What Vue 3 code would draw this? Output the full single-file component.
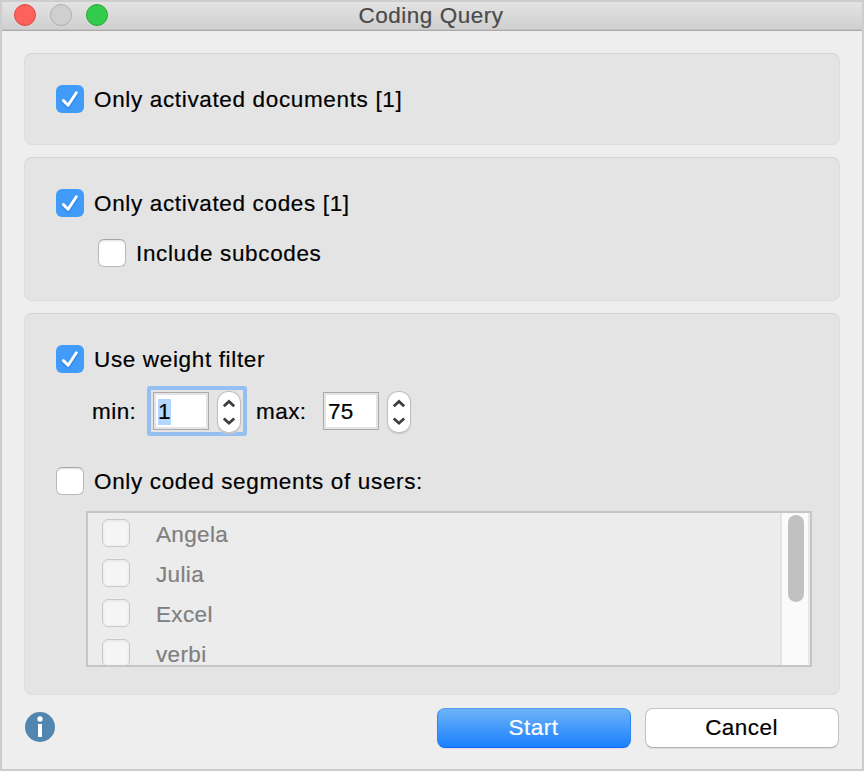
<script setup>
import { ref } from 'vue'

const users = ref(['Angela', 'Julia', 'Excel', 'verbi'])
</script>

<template>
  <div class="window">
    <header class="titlebar">
      <div class="lights">
        <i class="light close"></i>
        <i class="light minimize"></i>
        <i class="light zoom"></i>
      </div>
      <h1>Coding Query</h1>
    </header>

    <main class="content">
      <section class="panel documents">
        <div class="option">
          <span class="check on"><svg viewBox="0 0 28 28"><path d="M7.4 15.6 L12.1 20.3 L20.3 7.8" /></svg></span>
          <span class="label">Only activated documents [1]</span>
        </div>
      </section>

      <section class="panel codes">
        <div class="option">
          <span class="check on"><svg viewBox="0 0 28 28"><path d="M7.4 15.6 L12.1 20.3 L20.3 7.8" /></svg></span>
          <span class="label">Only activated codes [1]</span>
        </div>
        <div class="option sub">
          <span class="check"></span>
          <span class="label">Include subcodes</span>
        </div>
      </section>

      <section class="panel filters">
        <div class="option">
          <span class="check on"><svg viewBox="0 0 28 28"><path d="M7.4 15.6 L12.1 20.3 L20.3 7.8" /></svg></span>
          <span class="label">Use weight filter</span>
        </div>
        <div class="range">
          <span class="min">min:</span>
          <div class="spin focused">
            <span class="field"><mark>1</mark></span>
            <span class="stepper"><svg viewBox="0 0 24 42"><path d="M6.8 15.2 L12 10.4 L17.2 15.2 M6.8 27.4 L12 32.2 L17.2 27.4" /></svg></span>
          </div>
          <span class="max">max:</span>
          <div class="spin">
            <span class="field">75</span>
            <span class="stepper"><svg viewBox="0 0 24 42"><path d="M6.8 15.2 L12 10.4 L17.2 15.2 M6.8 27.4 L12 32.2 L17.2 27.4" /></svg></span>
          </div>
        </div>
        <div class="option">
          <span class="check"></span>
          <span class="label">Only coded segments of users:</span>
        </div>
        <div class="list">
          <ul>
            <li v-for="user in users" :key="user">
              <span class="check disabled"></span>
              <span>{{ user }}</span>
            </li>
          </ul>
          <div class="track"><div class="thumb"></div></div>
        </div>
      </section>
    </main>

    <footer class="footer">
      <svg class="info" viewBox="0 0 30 30">
        <circle cx="15" cy="15" r="15" fill="#5186b0" />
        <circle cx="15" cy="7" r="2.7" fill="#fff" />
        <rect x="13" y="12" width="4" height="13" fill="#fff" />
      </svg>
      <button class="btn primary">Start</button>
      <button class="btn">Cancel</button>
    </footer>
  </div>
</template>

<style>
body {
  margin: 0;
}
</style>

<style scoped>
* {
  box-sizing: border-box;
}

.window {
  display: flex;
  flex-direction: column;
  width: 864px;
  height: 771px;
  border: 2px solid #cdcdcd;
  background: #eee;
  color: #000;
  font: 22.5px/28px "Liberation Sans", Arial, sans-serif;
  letter-spacing: 0.65px;
  -webkit-text-stroke: 0.2px;
  white-space: nowrap;
  overflow: hidden;
}

.titlebar {
  display: grid;
  grid-template-columns: 120px 1fr 120px;
  height: 29px;
  flex: none;
  background: linear-gradient(#e3e3e3, #cfcfcf);
  border-bottom: 1px solid #a9a9a9;
  box-shadow: inset 0 -1px #c4c4c4;
}

.lights {
  display: flex;
  gap: 14px;
  padding: 2px 0 0 12px;
}

.light {
  width: 22px;
  height: 22px;
  border-radius: 50%;
  border: 1px solid;
}

.close {
  background: #fd625d;
  border-color: #e2463f;
}

.minimize {
  background: #cfcfcf;
  border-color: #b0b0b0;
}

.zoom {
  background: #33cb4b;
  border-color: #24a934;
}

h1 {
  margin: 0;
  padding-right: 2px;
  font-size: 22.5px;
  font-weight: 400;
  line-height: 27px;
  letter-spacing: 0.5px;
  text-align: center;
  color: #4a4a4a;
}

.content {
  display: flex;
  flex-direction: column;
  gap: 12px;
  padding: 22px 22px 0;
}

.panel {
  border: 1px solid #dcdcdc;
  border-top-color: #d4d4d4;
  border-radius: 8px;
  background: #e4e4e4;
  padding: 31px 27px 0 31px;
}

.documents {
  height: 92px;
}

.codes {
  height: 144px;
}

.filters {
  height: 382px;
}

.option {
  display: flex;
  align-items: center;
  gap: 10px;
  height: 28px;
}

.label {
  padding-top: 2px;
}

.sub {
  margin: 22px 0 0 42px;
}

.check {
  flex: none;
  width: 28px;
  height: 28px;
  border: 1px solid #b9b9b9;
  border-top-color: #a6a6a6;
  border-radius: 6px;
  background: #fff;
  box-shadow: inset 0 2px 2px -1px #ddd;
}

.on {
  border: 0;
  background: #419bf9;
  box-shadow: none;
}

.disabled {
  background: #f5f5f5;
  border-color: #c9c9c9;
  box-shadow: inset 0 1px 3px #e2e2e2;
}

.check svg,
.stepper svg {
  display: block;
  fill: none;
}

.check svg {
  width: 28px;
  height: 28px;
  stroke: #fff;
  stroke-width: 3;
  stroke-linecap: round;
  stroke-linejoin: round;
  filter: drop-shadow(0 1px 1px #2676d0);
}

.range {
  display: flex;
  align-items: center;
  height: 50px;
  margin: 13px 0 31px 36px;
}

.min {
  width: 55px;
  padding-top: 2px;
}

.max {
  width: 67px;
  margin-left: 9px;
  padding-top: 2px;
}

.min,
.max {
  letter-spacing: 0.45px;
}

.spin {
  display: flex;
  align-items: center;
  gap: 8px;
}

.focused {
  height: 50px;
  padding: 0 2px;
  border: 4px solid #94bff0;
  border-radius: 3px;
}

.field {
  display: flex;
  align-items: center;
  width: 56px;
  height: 38px;
  padding: 2px 0 0 4px;
  background: #fff;
  border: 1px solid #aaa;
  box-shadow: inset 0 0 0 2px #e4e4e4;
  letter-spacing: 0.3px;
}

mark {
  height: 26px;
  line-height: 26px;
  background: #b3d7ff;
  color: #000;
}

.stepper {
  width: 24px;
  height: 42px;
  margin-top: 2px;
  border-radius: 11px;
  background: #fff;
  box-shadow: inset 0 0 0 1px #bebebe, 0 1px 1px #c5c5c5;
}

.stepper svg {
  width: 24px;
  height: 42px;
  stroke: #3d3d3d;
  stroke-width: 2.7;
}

.list {
  display: flex;
  justify-content: space-between;
  width: 726px;
  height: 156px;
  margin: 16px 0 0 30px;
  border: 2px solid #c6c6c6;
  background: #ececec;
  overflow: hidden;
}

ul {
  display: flex;
  flex-direction: column;
  gap: 12px;
  margin: 0;
  padding: 6px 0 0 14px;
  list-style: none;
  color: #7f7f7f;
  letter-spacing: 0.35px;
}

li {
  display: flex;
  gap: 26px;
  height: 28px;
  line-height: 31px;
}

.track {
  width: 30px;
  height: 152px;
  padding: 2px 4px 0 6px;
  border-left: 2px solid #e3e3e3;
  border-right: 2px solid #e8e8e8;
  background: #fafafa;
}

.thumb {
  width: 16px;
  height: 87px;
  border-radius: 8px;
  background: #c1c1c1;
}

.footer {
  display: flex;
  gap: 14px;
  padding: 13px 23px 0;
}

.info {
  width: 30px;
  height: 30px;
  margin: 4px auto 0 0;
}

.btn {
  width: 194px;
  height: 40px;
  padding: 0 1px 0 0;
  border: 1px solid #c4c4c4;
  border-bottom-color: #b0b0b0;
  border-radius: 8px;
  background: #fff;
  color: #000;
  font: inherit;
  letter-spacing: 0.45px;
  box-shadow: 0 1px 1px #ddd;
}

.primary {
  border-color: #569eed #2f86f3 #1467f2;
  background: linear-gradient(#6db3f8, #1a80fd);
  color: #fff;
}
</style>
